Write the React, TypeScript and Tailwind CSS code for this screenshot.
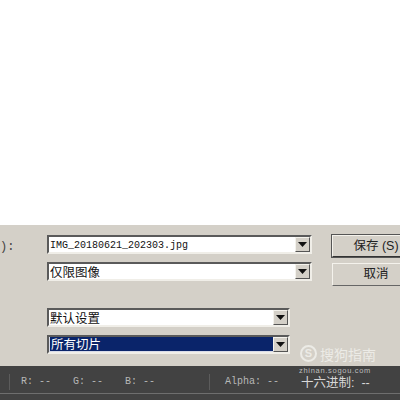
const font = "font-['Liberation_Mono','Noto_Sans_CJK_SC',monospace]"

function Arrow() {
  return (
    <div className="w-[15px] h-[15px] bg-[#d4d0c8] border border-t-[#f4f2ec] border-l-[#f4f2ec] border-r-[#555] border-b-[#555] flex items-center justify-center shrink-0">
      <svg width="9" height="5" viewBox="0 0 9 5"><path d="M0 0h9L4.5 5z" fill="#111" /></svg>
    </div>
  )
}

function Select({ label, width, selected, mono }: { label: string; width: string; selected?: boolean; mono?: boolean }) {
  return (
    <div className={`${width} h-[19px] flex items-stretch bg-white border-2 border-t-[#5a5a5a] border-l-[#5a5a5a] border-r-[#f0eee8] border-b-[#f0eee8]`}>
      <div className={`flex-1 flex items-center min-w-0 pl-[1px] leading-none whitespace-nowrap ${mono ? 'text-[10px] pt-[2px]' : 'text-[12.5px] pt-[5px]'} ${selected ? 'bg-[#0a246a] text-white border-l border-b border-[#d8dbe8]' : 'text-[#111]'}`}>
        {label}
      </div>
      <Arrow />
    </div>
  )
}

function Btn({ label, strong }: { label: string; strong?: boolean }) {
  return (
    <div className={`w-[88px] shrink-0 flex items-center justify-center leading-none text-[12.5px] text-[#222] bg-[#d4d0c8] border border-t-[#f4f2ec] border-l-[#f4f2ec] font-['Liberation_Sans','Noto_Sans_CJK_SC',sans-serif] ${strong ? 'h-[22px] pt-[1px] border-r-[#333] border-b-[#333] outline outline-[#555]' : 'h-[23px] border-r-[#666] border-b-[#666]'}`}>
      {label}
    </div>
  )
}

export default function App() {
  return (
    <div className={`w-[400px] h-[400px] overflow-hidden flex flex-col bg-white ${font}`}>
      <div className="h-[225px] shrink-0" />

      <div className="h-[141px] shrink-0 bg-[#d4d0c8] relative flex pt-[10px] overflow-hidden">
        <div className="w-[47px] shrink-0 pt-[3px] text-[12px] text-[#444] text-left whitespace-nowrap">):</div>
        <div className="w-[285px] shrink-0 flex flex-col">
          <div className="flex flex-col gap-[8px]">
            <Select label="IMG_20180621_202303.jpg" width="w-[265px]" mono />
            <Select label="仅限图像" width="w-[265px]" />
          </div>
          <div className="flex flex-col gap-[8px] mt-[27px]">
            <Select label="默认设置" width="w-[243px]" />
            <Select label="所有切片" width="w-[243px]" selected />
          </div>
        </div>
        <div className="flex flex-col gap-[6px]">
          <Btn label="保存 (S)" strong />
          <Btn label="取消" />
        </div>

        {/* watermark */}
        <div className="absolute left-[300px] top-[120px] flex items-center gap-[3px] text-[#ecebe6]">
          <div className="w-[17px] h-[17px] rounded-full border-2 border-[#ecebe6] flex items-center justify-center text-[11px] font-bold font-['Liberation_Sans',sans-serif]">S</div>
          <span className="text-[14px] leading-none font-['Noto_Sans_CJK_SC',sans-serif] whitespace-nowrap">搜狗指南</span>
        </div>
      </div>

      <div className="flex-1 bg-[#424242] relative">
        <div className="h-[28px] pt-[4px] border-b border-[#6e6e6e] flex items-center text-[#b8b8b8] text-[10px] leading-none">
          <div className="w-[10px] h-[16px] border-r border-[#5c5c5c] shrink-0" />
          <span className="ml-[11px] w-[52px]">R: --</span>
          <span className="w-[52px]">G: --</span>
          <span className="w-[47px]">B: --</span>
          <div className="w-px h-[16px] bg-[#5c5c5c] ml-[37px]" />
          <span className="ml-[15px] w-[76px]">Alpha: --</span>
          <span className="text-[#d8d8d8] text-[12.5px] pt-[3px] whitespace-pre font-['Liberation_Sans','Noto_Sans_CJK_SC',sans-serif]">十六进制:  --</span>
        </div>
        <div className="absolute left-[299px] top-[1px] text-[#bcbcbc] text-[7.5px] leading-none tracking-[0.7px] font-['Liberation_Sans',sans-serif] whitespace-nowrap">zhinan.sogou.com</div>
      </div>
    </div>
  )
}
